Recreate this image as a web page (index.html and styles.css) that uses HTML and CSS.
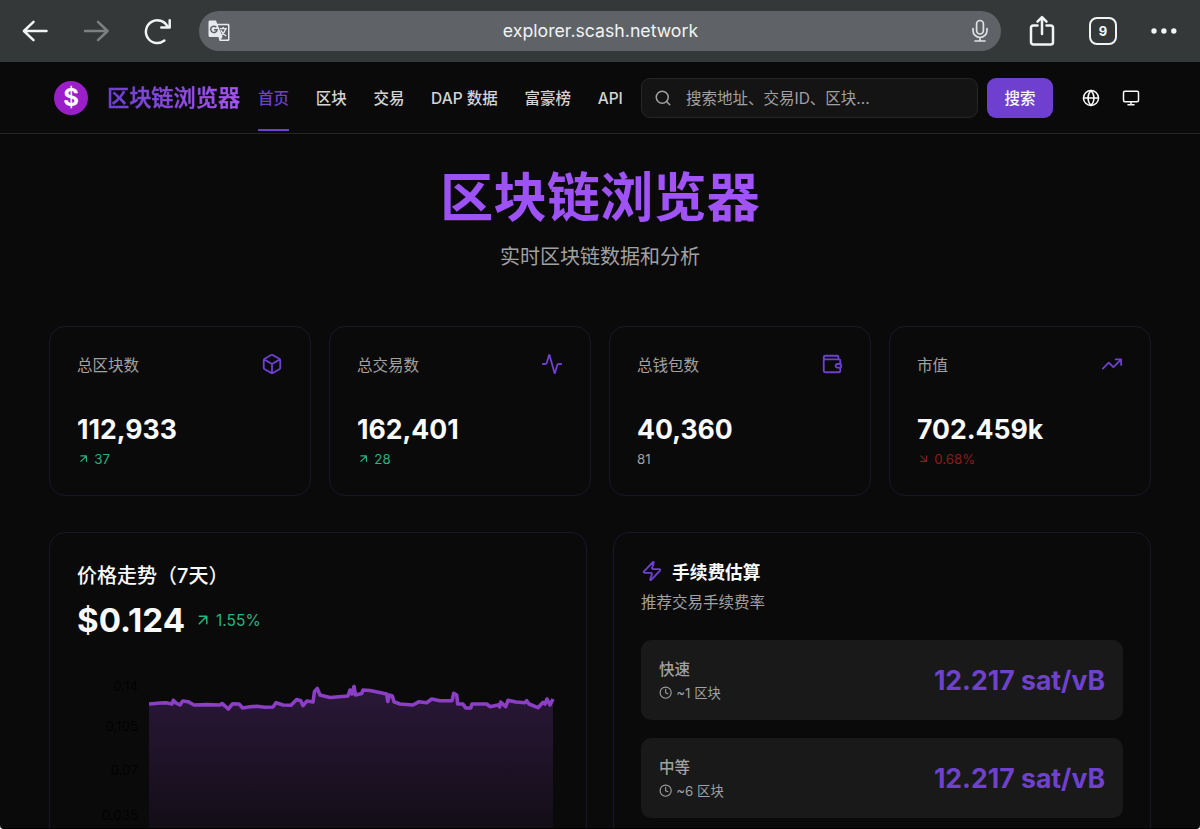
FILE: index.html
```html
<!DOCTYPE html>
<html lang="zh-CN">
<head>
<meta charset="utf-8">
<title>区块链浏览器</title>
<link rel="stylesheet" href="styles.css">
</head>
<body>
<div class="browser">
  <svg class="b-back" viewBox="0 0 28 24"><path d="M25.500 12H3M12.500 2.800 2.900 12l9.600 9.200"/></svg>
  <svg class="b-forward" viewBox="0 0 28 24"><path d="M2 12h22.500M15 2.800l9.600 9.200-9.600 9.200"/></svg>
  <svg class="b-reload" viewBox="0 0 30 30"><path d="M21.400 24.600A11.400 11.400 0 1 1 24.500 10.500M26.700 4.300V11.600H18.300"/></svg>
  <div class="address">
    <svg class="translate" viewBox="0 0 22 22"><path class="fill" d="M2 .5h6l1.200 3.300H20c.9 0 1.500.6 1.500 1.500v14.200c0 .9-.6 1.500-1.500 1.500h-8.400L10.400 17H2C1 17 .5 16.400.5 15.500V2C.5 1.100 1.100.5 2 .5Z"/><path class="cut" d="M9.800 5.300h9.500c.4 0 .7.300.7.700v12.800c0 .4-.3.700-.7.700h-6.500l1.800-2.700Z"/><path class="g" d="M8.300 7.200a3.200 3.200 0 1 0 .8 2.500H6"/><path class="wen" d="M11.800 8.600h7M15.200 7v1.600M17.800 8.700c-.8 2.700-2.400 4.600-4.700 6M12.800 10.200c1 2.200 3.200 4.500 5.400 5.800"/></svg>
    <span class="url">explorer.scash.network</span>
    <svg class="mic" viewBox="0 0 18 24"><rect x="5.600" y="1.500" width="6.800" height="13.500" rx="3.400"/><path d="M2 9.500v2a7 7 0 0 0 14 0v-2M9 18.500v3.300M4 22h10"/></svg>
  </div>
  <svg class="b-share" viewBox="0 0 26 32"><path d="M8.500 10.500H4.300A2.300 2.300 0 0 0 2 12.800V27.300a2.300 2.300 0 0 0 2.300 2.300H21.700A2.300 2.300 0 0 0 24 27.300V12.800a2.300 2.300 0 0 0-2.300-2.300H17.500M13 19V2.500M8.500 6.700 13 2.200l4.500 4.500"/></svg>
  <div class="tabs">9</div>
  <svg class="b-more" viewBox="0 0 26 6"><circle cx="3" cy="3" r="2.700"/><circle cx="12.900" cy="3" r="2.700"/><circle cx="22.800" cy="3" r="2.700"/></svg>
</div>

<header class="header">
  <div class="coin">$</div>
  <div class="brand">区块链浏览器</div>
  <nav class="nav">
    <a class="active">首页</a><a>区块</a><a>交易</a><a>DAP 数据</a><a>富豪榜</a><a>API</a>
  </nav>
  <div class="search">
    <svg class="icon" viewBox="0 0 24 24"><circle cx="11" cy="11" r="8"/><path d="m21 21-4.300-4.300"/></svg>
    <span>搜索地址、交易ID、区块...</span>
  </div>
  <div class="button">搜索</div>
  <svg class="icon tool globe" viewBox="0 0 24 24"><circle cx="12" cy="12" r="10"/><path d="M12 2a14.500 14.500 0 0 0 0 20 14.500 14.500 0 0 0 0-20M2 12h20"/></svg>
  <svg class="icon tool" viewBox="0 0 24 24"><rect width="20" height="14" x="2" y="3" rx="2"/><path d="M8 21h8M12 17v4"/></svg>
</header>

<main class="main">
  <h1>区块链浏览器</h1>
  <p class="lead">实时区块链数据和分析</p>

  <section class="stats">
    <div class="card stat">
      <div class="stat-head"><span>总区块数</span><svg class="icon" viewBox="0 0 24 24"><path d="M21 8a2 2 0 0 0-1-1.730l-7-4a2 2 0 0 0-2 0l-7 4A2 2 0 0 0 3 8v8a2 2 0 0 0 1 1.730l7 4a2 2 0 0 0 2 0l7-4A2 2 0 0 0 21 16ZM3.300 7 12 12l8.700-5M12 22V12"/></svg></div>
      <div class="value">112,933</div>
      <div class="delta up"><svg class="icon" viewBox="0 0 24 24"><path d="M7 7h10v10M7 17 17 7"/></svg>37</div>
    </div>
    <div class="card stat">
      <div class="stat-head"><span>总交易数</span><svg class="icon" viewBox="0 0 24 24"><path d="M22 12h-2.480a2 2 0 0 0-1.930 1.460l-2.350 8.360a.25.25 0 0 1-.48 0L9.240 2.180a.25.25 0 0 0-.48 0l-2.350 8.360A2 2 0 0 1 4.490 12H2"/></svg></div>
      <div class="value">162,401</div>
      <div class="delta up"><svg class="icon" viewBox="0 0 24 24"><path d="M7 7h10v10M7 17 17 7"/></svg>28</div>
    </div>
    <div class="card stat">
      <div class="stat-head"><span>总钱包数</span><svg class="icon" viewBox="0 0 24 24"><path d="M19 7V4a1 1 0 0 0-1-1H5a2 2 0 0 0 0 4h15a1 1 0 0 1 1 1v4h-3a2 2 0 0 0 0 4h3a1 1 0 0 0 1-1v-2a1 1 0 0 0-1-1M3 5v14a2 2 0 0 0 2 2h15a1 1 0 0 0 1-1v-4"/></svg></div>
      <div class="value">40,360</div>
      <div class="delta">81</div>
    </div>
    <div class="card stat">
      <div class="stat-head"><span>市值</span><svg class="icon" viewBox="0 0 24 24"><path d="m22 7-8.500 8.500-5-5L2 17M16 7h6v6"/></svg></div>
      <div class="value">702.459k</div>
      <div class="delta down"><svg class="icon" viewBox="0 0 24 24"><path d="m7 7 10 10M17 7v10H7"/></svg>0.68%</div>
    </div>
  </section>

  <section class="panels">
    <div class="card price">
      <h2>价格走势（7天）</h2>
      <div class="price-row"><b>$0.124</b><span class="up"><svg class="icon" viewBox="0 0 24 24"><path d="M7 7h10v10M7 17 17 7"/></svg>1.55%</span></div>
      <div class="chart">
        <div class="axis"><span>0.14</span><span>0.105</span><span>0.07</span><span>0.035</span></div>
        <svg class="plot" viewBox="149 670 408 160">
          <defs><linearGradient id="area" gradientUnits="userSpaceOnUse" x1="0" y1="686" x2="0" y2="860"><stop offset="0" stop-color="#8b3fc4" stop-opacity=".25"/><stop offset="1" stop-color="#8b3fc4" stop-opacity=".03"/></linearGradient></defs>
          <path class="area" d="M149 704 160 703 172 704 173.300 700.300 176 703 180 705 182.700 701 188 701.700 194 705 220 705 222 703.500 228.300 709 232.700 703.700 239 704 242.700 708 257 706.300 273 707 276 702.700 283 705 291 705.300 296.700 699.500 300.700 700.700 303 705.700 307 701 313 702 314.500 691.500 317.300 688.500 320 695 330 697.500 348 696 350 690 352 694 354 686.500 355.500 695 361.700 693.500 363 690 370 690.500 386.700 694 387.800 701.500 389.300 695 392.300 696 394 701.700 400 704 413 705 419 701.700 426.700 702.700 431.700 699 440 700.700 452 700.700 453.700 693.300 456.700 695 457.700 704 463 704 465.700 708 470.700 708 472 704 486.700 704 490 706.700 499 704.700 499.700 707 500.700 702 505.700 706.700 508 700.300 525 702.700 526.700 700.700 529 704 538 707.700 543 702.300 545 704 547 699 550 705 553 699V830H149Z"/>
          <path class="line" d="M149 704 160 703 166 702.800 172 704 173.300 700.300 176 703 180 705 182.700 701 188 701.700 194 705 207 704.600 220 705 222 703.500 225 706 228.300 709 232.700 703.700 239 704 242.700 708 250 706.800 257 706.300 265 707.300 273 707 276 702.700 283 705 291 705.300 296.700 699.500 300.700 700.700 303 705.700 307 701 313 702 314.500 691.500 317.300 688.500 320 695 330 697.500 348 696 350 690 352 694 354 686.500 355.500 695 361.700 693.500 363 690 370 690.500 386.700 694 387.800 701.500 389.300 695 392.300 696 394 701.700 400 704 413 705 419 701.700 426.700 702.700 431.700 699 440 700.700 452 700.700 453.700 693.300 456.700 695 457.700 704 463 704 465.700 708 470.700 708 472 704 486.700 704 490 706.700 499 704.700 499.700 707 500.700 702 505.700 706.700 508 700.300 516 702 525 702.700 526.700 700.700 529 704 538 707.700 543 702.300 545 704 547 699 550 705 553 699"/>
        </svg>
      </div>
    </div>
    <div class="card fees">
      <h3><svg class="icon" viewBox="0 0 24 24"><path d="M4 14a1 1 0 0 1-.78-1.630l9.900-10.200a.5.500 0 0 1 .86.460l-1.920 6.020A1 1 0 0 0 13 10h7a1 1 0 0 1 .78 1.630l-9.900 10.200a.5.500 0 0 1-.86-.46l1.920-6.020A1 1 0 0 0 11 14z"/></svg>手续费估算</h3>
      <p>推荐交易手续费率</p>
      <div class="fee">
        <div><div class="fee-name">快速</div><div class="fee-time"><svg class="icon" viewBox="0 0 24 24"><circle cx="12" cy="12" r="10"/><path d="M12 6v6l4 2"/></svg>~1 区块</div></div>
        <b>12.217 sat/vB</b>
      </div>
      <div class="fee">
        <div><div class="fee-name">中等</div><div class="fee-time"><svg class="icon" viewBox="0 0 24 24"><circle cx="12" cy="12" r="10"/><path d="M12 6v6l4 2"/></svg>~6 区块</div></div>
        <b>12.217 sat/vB</b>
      </div>
    </div>
  </section>
</main>
</body>
</html>
```
FILE: styles.css
```css
* { box-sizing: border-box; }
html { height: 829px; overflow: hidden; background: #fff; }
body {
  display: flex;
  flex-direction: column;
  margin: 0;
  height: 829px;
  overflow: hidden;
  border-bottom: 1px solid #000;
  border-radius: 0 0 4px 4px;
  background: #0a0a0a;
  color: #fafafa;
  font-family: Inter, "Noto Sans CJK SC", sans-serif;
}
h1, h2, h3, p { margin: 0; }
svg { display: block; flex: none; }
.icon { fill: none; stroke: currentColor; stroke-width: 2; stroke-linecap: round; stroke-linejoin: round; }

/* Browser toolbar */
.browser { display: flex; flex: none; align-items: center; height: 62px; padding-left: 21px; background: #353839; }
.browser > svg { fill: none; stroke: #f1f3f4; stroke-width: 2.5; stroke-linecap: round; stroke-linejoin: round; }
.b-back { width: 28px; height: 24px; }
.browser > .b-forward { width: 28px; height: 24px; margin-left: 34px; stroke: #7d8081; }
.b-reload { width: 30px; height: 30px; margin-left: 32px; }
.address { display: flex; align-items: center; width: 802px; height: 40px; margin-left: 26px; padding: 0 12px 0 9px; border-radius: 20px; background: #5f6367; }
.translate { width: 22px; height: 22px; }
.translate .fill { fill: #e8eaed; }
.translate .cut { fill: #5f6367; }
.translate .g { fill: none; stroke: #5f6367; stroke-width: 1.5; }
.translate .wen { fill: none; stroke: #e8eaed; stroke-width: 1.4; }
.url { flex: 1; padding-bottom: 1px; text-align: center; font-size: 17.700px; color: #f1f3f4; }
.mic { width: 18px; height: 24px; fill: none; stroke: #dfe1e3; stroke-width: 1.7; stroke-linecap: round; }
.b-share { width: 26px; height: 32px; margin-left: 28px; }
.tabs { display: grid; place-items: center; width: 28px; height: 28px; margin-left: 34px; border: 2px solid #f1f3f4; border-radius: 8px; font-size: 13px; font-weight: 700; }
.browser > .b-more { width: 26px; height: 6px; margin-left: 34px; fill: #f1f3f4; stroke: none; }

/* Site header */
.header { display: flex; flex: none; align-items: center; height: 72px; padding-left: 54px; border-bottom: 1px solid #262626; }
.coin { width: 34px; height: 34px; border-radius: 50%; background: #9a1fc8; text-align: center; font: 700 24px/34px Inter, sans-serif; }
.brand { margin-left: 19px; width: 133px; font-size: 22.200px; line-height: 32px; font-weight: 500; white-space: nowrap; background: linear-gradient(90deg, #6d40cf, #a855f7); -webkit-background-clip: text; background-clip: text; color: transparent; -webkit-text-stroke: .5px transparent; }
.nav { display: flex; gap: 26.700px; width: 383px; margin-left: 18px; font-size: 15.500px; font-weight: 500; white-space: nowrap; color: #d4d4d4; }
.nav a { height: 66px; padding-top: 1px; line-height: 66px; }
.nav .active { color: #6d40cf; border-bottom: 2px solid #6d40cf; }
.search { display: flex; align-items: center; gap: 14px; width: 337px; height: 40px; padding-left: 12px; border: 1px solid #262626; border-radius: 9px; background: #141414; font-size: 15.500px; color: #a1a1a1; }
.search span { padding-bottom: 2px; }
.search .icon { width: 18px; height: 18px; }
.button { width: 66px; height: 40px; margin-left: 9px; border-radius: 9px; background: #6f3fd0; text-align: center; line-height: 41px; font-size: 15.500px; font-weight: 500; }
.tool { width: 18px; height: 18px; margin-left: 22px; }
.globe { margin-left: 29px; }

/* Hero */
.main { flex: 1; min-height: 0; overflow: hidden; padding: 29px 49px 0; }
h1 { text-align: center; font-size: 53.300px; line-height: 70px; font-weight: 700; background: linear-gradient(90deg, #9550f5, #a855f7); -webkit-background-clip: text; background-clip: text; color: transparent; }
.lead { margin-top: 10px; text-align: center; font-size: 20px; line-height: 28px; color: #a1a1a1; }

/* Cards */
.card { border: 1px solid #1a1729; border-radius: 16px; padding: 0 27px; }
.stats { display: grid; grid-template-columns: repeat(4, 1fr); gap: 18px; margin-top: 55px; }
.stat { height: 170px; padding-top: 25px; }
.stat-head { display: flex; align-items: center; justify-content: space-between; height: 24px; font-size: 15.500px; color: #a1a1a1; }
.stat-head span { padding-bottom: 1px; }
.stat-head .icon { width: 22px; height: 22px; color: #6d40cf; }
.value { margin-top: 36px; font-size: 26.600px; line-height: 34px; font-weight: 700; }
.delta { display: flex; align-items: center; gap: 4px; margin-top: 4px; font-size: 13.300px; line-height: 18px; color: #a1a1a1; }
.delta .icon { width: 13.300px; height: 13.300px; }
.up { color: #26b582; }
.down { color: #8b1d1d; }

/* Price chart and fee estimates */
.panels { display: grid; grid-template-columns: 1fr 1fr; gap: 26px; margin-top: 36px; }
.panels .card { height: 340px; }
.price { padding-top: 29px; }
h2 { font-size: 20px; line-height: 28px; font-weight: 500; }
.price-row { display: flex; align-items: center; gap: 9px; height: 40px; margin-top: 10px; }
.price-row b { font-size: 33.100px; }
.price-row span { display: flex; align-items: center; gap: 4px; font-size: 15.500px; }
.price-row .icon { width: 18px; height: 18px; }
.chart { display: flex; justify-content: space-between; margin-top: 30px; }
.axis { display: grid; grid-template-rows: 40px 44px 45px 31px; width: 61px; margin-top: 7px; text-align: right; font-size: 13.300px; line-height: 18px; color: #020202; }
.plot { width: 408px; height: 160px; margin-right: 2px; }
.area { fill: url(#area); }
.line { fill: none; stroke: #8b3fc4; stroke-width: 3.600; stroke-linejoin: round; }
.fees { padding-top: 24px; }
h3 { display: flex; align-items: center; gap: 9px; height: 28px; font-size: 17.700px; font-weight: 700; }
h3 .icon { width: 22px; height: 22px; color: #6d40cf; }
.fees p { margin-top: 6px; font-size: 15.500px; line-height: 24px; color: #a1a1a1; }
.fee { display: flex; align-items: center; justify-content: space-between; height: 80px; margin-top: 25px; padding: 0 18px; border-radius: 10px; background: #191919; }
.fee + .fee { margin-top: 18px; }
.fee-name { font-size: 15.500px; line-height: 24px; font-weight: 500; color: #a1a1a1; }
.fee-time { display: flex; align-items: center; gap: 4px; margin-top: 1px; font-size: 13.300px; line-height: 20px; color: #a1a1a1; }
.fee-time .icon { width: 13.300px; height: 13.300px; }
.fee b { font-size: 26.600px; color: #6f42ce; }
```
